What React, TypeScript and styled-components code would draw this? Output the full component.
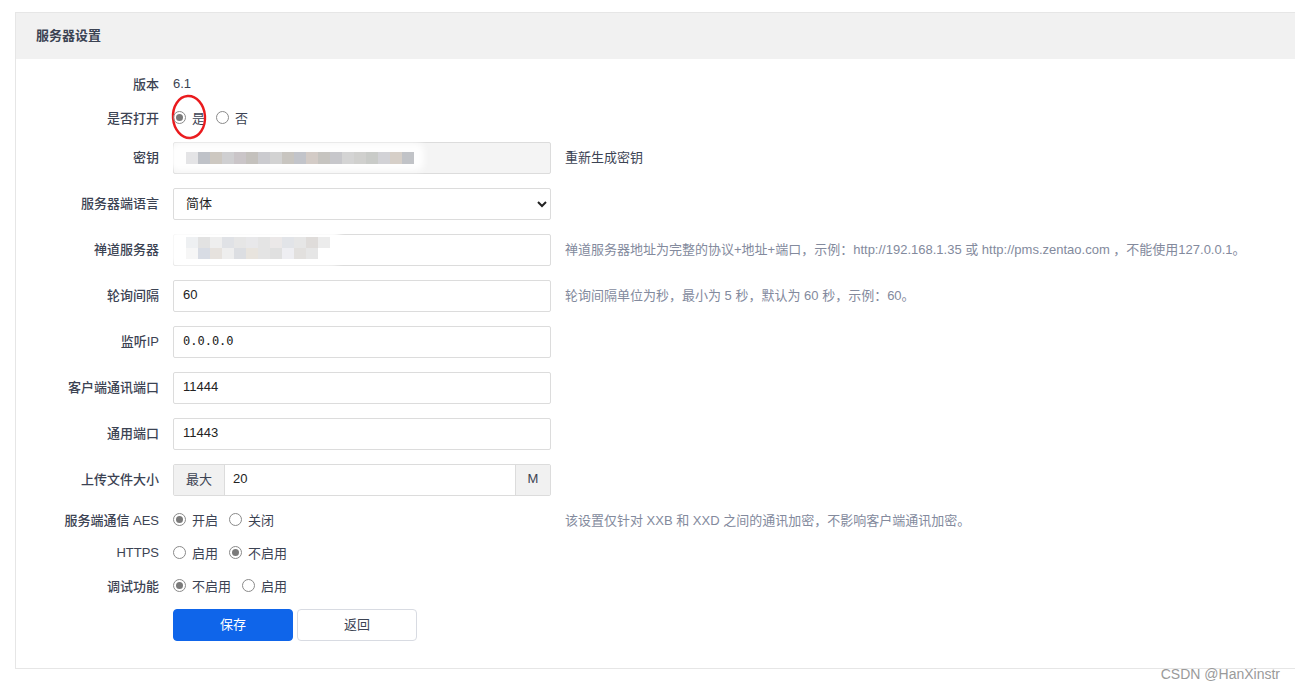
import styled, { createGlobalStyle } from "styled-components";

const GlobalStyle = createGlobalStyle`
  body {
    margin: 0;
    background: #fff;
    font-family: "Liberation Sans", "Noto Sans CJK SC", sans-serif;
    font-size: 13px;
    color: #3c4353;
  }
`;

const keyBlocks = [
  "#e4e4e6", "#bfc2c8", "#cdc8c1", "#cfcfd1", "#cac5c8", "#c4c1bd", "#cbcbcf",
  "#d2d2d2", "#c8c5c0", "#c2c4ca", "#d3cbc6", "#c6c4c0", "#c7c7cb", "#d4d4d4",
  "#d0d0ce", "#c9cbc8", "#d2d2d6", "#d6cfc8", "#c1c3c7",
];

const serverTop = [
  "#eef0f2", "#e2e2e2", "#eeeeee", "#e0e2e6", "#e6e6e6", "#e8e8ea", "#e4e4e4",
  "#ebe8e8", "#e2e4e8", "#e6e6e6", "#dfdcda", "#ececec",
];
const serverBottom = [
  "#f6f6f6", "#d8dce4", "#e6e2de", "#eeeeee", "#dcdee2", "#e8e4de", "#e4e4e4",
  "#e0e0e0", "#eeeef2", "#e2e0de", "#e6e6e6", "#ffffff",
];

function App() {
  return (
    <>
      <GlobalStyle />
      <Page>
        <Panel>
          <PanelHeader>服务器设置</PanelHeader>
          <Body>
            <Field $h={20}>
              <Label>版本</Label>
              <Value>6.1</Value>
            </Field>
            <Field $h={20}>
              <Label>是否打开</Label>
              <Radios>
                <Highlight viewBox="0 0 38 46">
                  <ellipse
                    cx="19"
                    cy="23"
                    rx="16"
                    ry="21"
                    fill="none"
                    stroke="#ea1a1d"
                    strokeWidth="2.4"
                    transform="rotate(-4 19 23)"
                  />
                </Highlight>
                <Radio $checked>是</Radio>
                <Radio>否</Radio>
              </Radios>
            </Field>
            <Field>
              <Label>密钥</Label>
              <Input as="div" $disabled>
                <Mosaic $top={9} $left={12}>
                  {keyBlocks.map((c, i) => (
                    <Block key={i} style={{ background: c }} />
                  ))}
                </Mosaic>
              </Input>
              <LinkText>重新生成密钥</LinkText>
            </Field>
            <Field>
              <Label>服务器端语言</Label>
              <Select defaultValue="zh-cn">
                <option value="zh-cn">简体</option>
                <option value="zh-tw">繁體</option>
                <option value="en">English</option>
              </Select>
            </Field>
            <Field>
              <Label>禅道服务器</Label>
              <Input as="div">
                <Mosaic $top={2} $left={12}>
                  <div>
                    <BlockRow>
                      {serverTop.map((c, i) => (
                        <Block key={i} $h={11} style={{ background: c }} />
                      ))}
                    </BlockRow>
                    <BlockRow>
                      {serverBottom.map((c, i) => (
                        <Block key={i} $h={11} style={{ background: c }} />
                      ))}
                    </BlockRow>
                  </div>
                </Mosaic>
              </Input>
              <Help>
                禅道服务器地址为完整的协议+地址+端口，示例：http://192.168.1.35 或 http://pms.zentao.com ，不能使用127.0.0.1。
              </Help>
            </Field>
            <Field>
              <Label>轮询间隔</Label>
              <Input defaultValue="60" />
              <Help>轮询间隔单位为秒，最小为 5 秒，默认为 60 秒，示例：60。</Help>
            </Field>
            <Field>
              <Label>监听IP</Label>
              <Input defaultValue="0.0.0.0" $mono />
            </Field>
            <Field>
              <Label>客户端通讯端口</Label>
              <Input defaultValue="11444" />
            </Field>
            <Field>
              <Label>通用端口</Label>
              <Input defaultValue="11443" />
            </Field>
            <Field>
              <Label>上传文件大小</Label>
              <InputGroup>
                <Addon $w={51}>最大</Addon>
                <GroupInput defaultValue="20" />
                <Addon $w={35}>M</Addon>
              </InputGroup>
            </Field>
            <Field $h={19}>
              <Label>服务端通信 AES</Label>
              <Radios>
                <Radio $checked>开启</Radio>
                <Radio>关闭</Radio>
              </Radios>
              <Help>该设置仅针对 XXB 和 XXD 之间的通讯加密，不影响客户端通讯加密。</Help>
            </Field>
            <Field $h={19}>
              <Label>HTTPS</Label>
              <Radios>
                <Radio>启用</Radio>
                <Radio $checked>不启用</Radio>
              </Radios>
            </Field>
            <Field $h={19}>
              <Label>调试功能</Label>
              <Radios>
                <Radio $checked>不启用</Radio>
                <Radio>启用</Radio>
              </Radios>
            </Field>
            <Field>
              <Label />
              <Actions>
                <Button $primary>保存</Button>
                <Button>返回</Button>
              </Actions>
            </Field>
          </Body>
        </Panel>
        <Watermark>CSDN @HanXinstr</Watermark>
      </Page>
    </>
  );
}
export default App;

function Radio({ children, $checked }: { children: React.ReactNode; $checked?: boolean }) {
  return (
    <RadioItem>
      <RadioCircle $checked={$checked} />
      {children}
    </RadioItem>
  );
}

const Page = styled.div`
  position: relative;
  height: 689px;
  padding: 12px 0 0 15px;
  box-sizing: border-box;
  overflow: hidden;
`;

const Panel = styled.section`
  border: 1px solid #e6e6e6;
  border-right: none;
  background: #fff;
`;

const PanelHeader = styled.header`
  height: 46px;
  display: flex;
  align-items: center;
  padding: 0 0 3px 20px;
  box-sizing: border-box;
  background: #f1f1f1;
  font-weight: bold;
  color: #3c4353;
`;

const Body = styled.div`
  display: flex;
  flex-direction: column;
  gap: 14px;
  padding: 15px 0 27px;
`;

const Field = styled.div<{ $h?: number }>`
  display: grid;
  grid-template-columns: 143px 378px auto;
  column-gap: 14px;
  align-items: center;
  height: ${(p) => p.$h ?? 32}px;
`;

/* CJK fallback sits low in the line box; a little bottom padding lifts text to centre */
const Label = styled.div`
  text-align: right;
  color: #3c4353;
  font-weight: 500;
  white-space: nowrap;
  padding-bottom: 4px;
`;

const Value = styled.div`
  color: #3c4353;
  padding-bottom: 4px;
`;

const Radios = styled.div`
  position: relative;
  display: flex;
  align-items: center;
  gap: 11px;
  padding-bottom: 4px;
`;

const RadioItem = styled.label`
  display: flex;
  align-items: center;
  gap: 6px;
  color: #3c4353;
`;

const RadioCircle = styled.span<{ $checked?: boolean }>`
  width: 11px;
  height: 11px;
  border-radius: 50%;
  border: 1px solid #8a8a8a;
  position: relative;
  &::after {
    content: "";
    display: ${(p) => (p.$checked ? "block" : "none")};
    position: absolute;
    inset: 2px;
    border-radius: 50%;
    background: #7a7a7a;
  }
`;

const Highlight = styled.svg`
  position: absolute;
  left: -3px;
  top: -14px;
  width: 38px;
  height: 46px;
  pointer-events: none;
`;

const Input = styled.input<{ $disabled?: boolean; $mono?: boolean }>`
  box-sizing: border-box;
  position: relative;
  width: 378px;
  height: 32px;
  padding: 0 9px 3px;
  border: 1px solid #dcdcdc;
  border-radius: 2px;
  background: ${(p) => (p.$disabled ? "#f4f4f4" : "#fff")};
  color: #222;
  font-family: ${(p) =>
    p.$mono ? '"DejaVu Sans Mono", monospace' : '"Liberation Sans", "Noto Sans CJK SC", sans-serif'};
  font-size: ${(p) => (p.$mono ? "12px" : "13px")};
  outline: none;
`;

const Mosaic = styled.div<{ $top: number; $left: number }>`
  position: absolute;
  top: ${(p) => p.$top}px;
  left: ${(p) => p.$left}px;
  display: flex;
  &::before {
    content: "";
    position: absolute;
    inset: -9px -10px -7px -16px;
    background: rgba(255, 255, 255, 0.9);
    filter: blur(3px);
    border-radius: 8px;
  }
  > * {
    position: relative;
  }
`;

const BlockRow = styled.div`
  display: flex;
`;

const Block = styled.span<{ $h?: number }>`
  width: 12px;
  height: ${(p) => p.$h ?? 12}px;
`;

const Select = styled.select`
  box-sizing: border-box;
  width: 378px;
  height: 32px;
  padding: 0 8px 2px;
  border: 1px solid #dcdcdc;
  border-radius: 2px;
  background: #fff;
  color: #222;
  font-family: "Liberation Sans", "Noto Sans CJK SC", sans-serif;
  font-size: 13px;
  outline: none;
`;

const InputGroup = styled.div`
  display: flex;
  width: 378px;
  height: 32px;
  border: 1px solid #dcdcdc;
  border-radius: 2px;
  box-sizing: border-box;
`;

const Addon = styled.div<{ $w: number }>`
  width: ${(p) => p.$w}px;
  display: flex;
  align-items: center;
  justify-content: center;
  padding-bottom: 3px;
  box-sizing: border-box;
  background: #f1f1f1;
  color: #3c4353;
  &:first-child {
    border-right: 1px solid #dcdcdc;
  }
  &:last-child {
    border-left: 1px solid #dcdcdc;
  }
`;

const GroupInput = styled.input`
  flex: 1;
  min-width: 0;
  border: none;
  padding: 0 8px 3px;
  font-family: "Liberation Sans", "Noto Sans CJK SC", sans-serif;
  font-size: 13px;
  color: #222;
  outline: none;
`;

const Help = styled.div`
  color: #838a9d;
  white-space: nowrap;
  padding-bottom: 4px;
`;

const LinkText = styled.a`
  color: #3c4353;
  cursor: pointer;
  padding-bottom: 4px;
`;

const Actions = styled.div`
  display: flex;
  gap: 4px;
`;

const Button = styled.button<{ $primary?: boolean }>`
  width: 120px;
  height: 32px;
  padding: 0 0 3px;
  border-radius: 4px;
  border: 1px solid ${(p) => (p.$primary ? "#0f65ea" : "#d8dbe2")};
  background: ${(p) => (p.$primary ? "#0f65ea" : "#fff")};
  color: ${(p) => (p.$primary ? "#fff" : "#3c4353")};
  font-family: "Liberation Sans", "Noto Sans CJK SC", sans-serif;
  font-size: 13px;
  cursor: pointer;
`;

const Watermark = styled.div`
  position: absolute;
  right: 15px;
  bottom: 7px;
  color: #9a9a9a;
  font-size: 14px;
`;
